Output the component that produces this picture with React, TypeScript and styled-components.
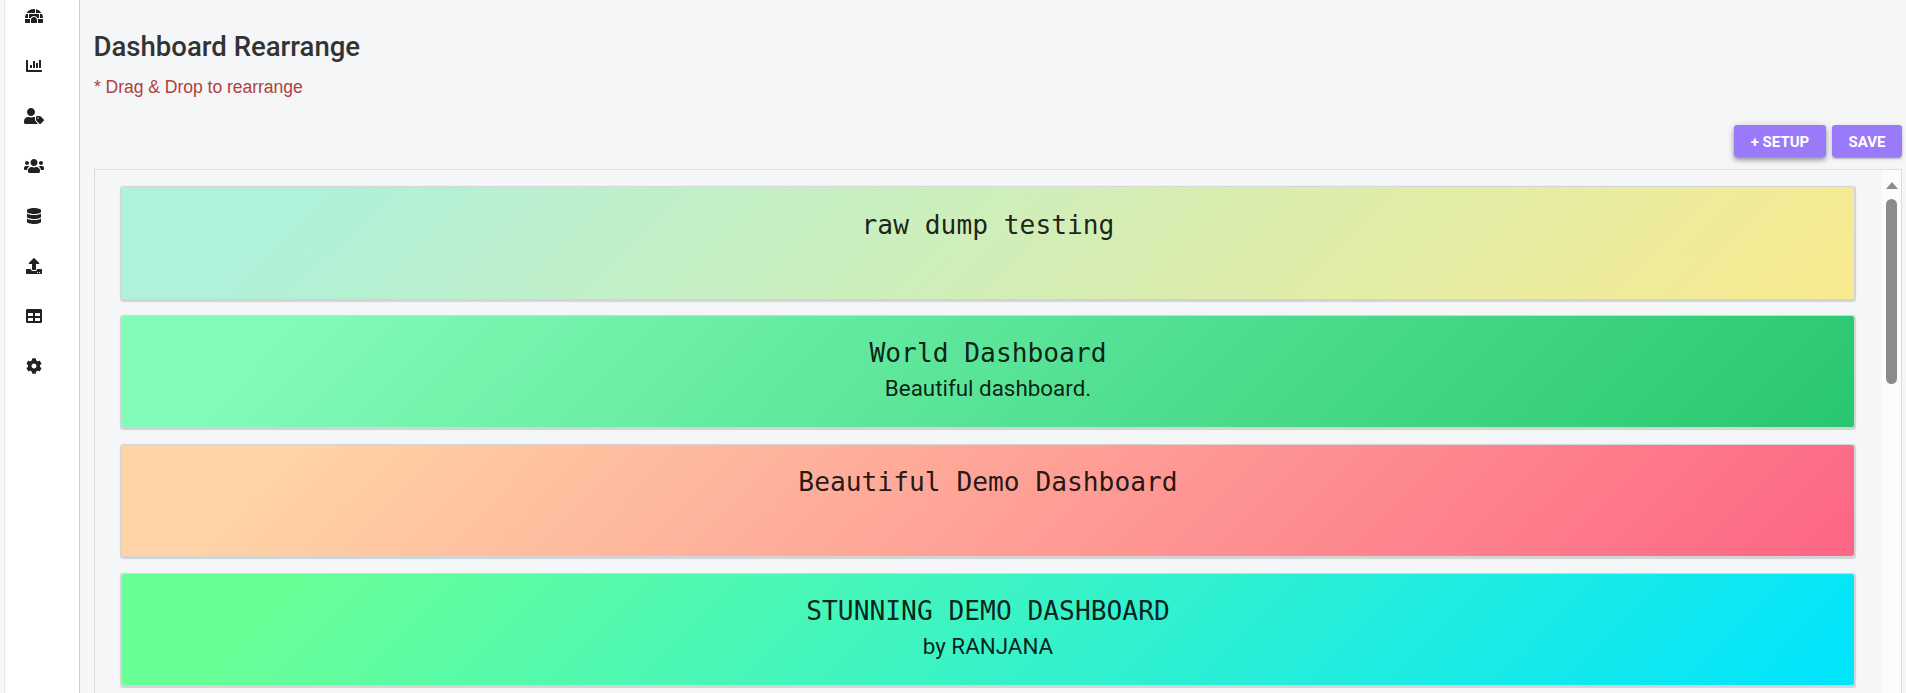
import React from "react";
import styled, { createGlobalStyle, css } from "styled-components";
import {
  FaChartBar,
  FaCog,
  FaDatabase,
  FaIgloo,
  FaTable,
  FaUpload,
  FaUserTag,
  FaUsers,
} from "react-icons/fa";

const GlobalStyle = createGlobalStyle`
  *, *::before, *::after { box-sizing: border-box; }
  html, body { margin: 0; height: 100%; overflow: hidden; }
  body { background: #f4f6f8; font-family: Roboto, "Liberation Sans", sans-serif; }
  #root { height: 100%; }
`;

const Page = styled.div`
  display: flex;
  height: 100vh;
  overflow: hidden;
  padding-left: 4px;
`;

const Sidebar = styled.nav`
  flex: 0 0 76px;
  display: flex;
  flex-direction: column;
  align-items: center;
  padding-right: 16px;
  margin-top: -9px;
  height: calc(100% + 9px);
  background: #fff;
  border-left: 1px solid #e6e6e6;
  border-right: 1px solid #cfcfd1;
`;

const NavItem = styled.a<{ $iconWidth: number }>`
  flex: 0 0 50px;
  display: flex;
  align-items: center;
  justify-content: center;
  color: #212121;

  svg {
    display: block;
    flex: none;
    height: 16px;
    width: ${(p) => p.$iconWidth}px;
  }
`;

const Main = styled.main`
  flex: 1;
  min-width: 0;
  display: flex;
  flex-direction: column;
  padding: 30px 4px 0 14px;
`;

const Title = styled.h1`
  margin: 0 0 0 -0.5px;
  font-size: 27.55px;
  line-height: 34px;
  font-weight: 500;
  color: #333;
`;

const Hint = styled.p`
  margin: 11px 0 0;
  font-family: "Liberation Sans", Arial, sans-serif;
  font-size: 17.6px;
  line-height: 24px;
  letter-spacing: -0.06px;
  color: #b0413e;
`;

const Actions = styled.div`
  display: flex;
  justify-content: flex-end;
  gap: 6px;
  margin: 26px 0 12px;
`;

const ActionButton = styled.button<{ $width: number; $raised?: boolean }>`
  width: ${(p) => p.$width}px;
  height: 32px;
  padding: 2px 0 0;
  border: 0;
  border-radius: 3px;
  background: #9a79fa;
  color: #fff;
  font: 700 15px/30px Roboto, sans-serif;
  ${(p) =>
    p.$raised
      ? css`
          box-shadow: 0 2px 4px -1px rgba(0, 0, 0, 0.3),
            0 4px 5px 0 rgba(0, 0, 0, 0.18), 0 1px 10px 0 rgba(0, 0, 0, 0.14);
        `
      : css`
          box-shadow: 0 3px 1px -2px rgba(0, 0, 0, 0.2),
            0 2px 2px 0 rgba(0, 0, 0, 0.18), 0 1px 5px 0 rgba(0, 0, 0, 0.12);
        `}
`;

const Board = styled.section`
  flex: 1;
  min-height: 0;
  display: flex;
  border: 1px solid #dcdee0;
  border-bottom: 0;
  overflow: hidden;
`;

const CardList = styled.div`
  flex: 1;
  display: flex;
  flex-direction: column;
  gap: 18px;
  padding: 17px 28px 0 27px;
`;

const Card = styled.article<{ $from: string; $to: string; $first?: boolean }>`
  flex: 0 0 111px;
  padding-top: 20px;
  border-radius: 2px;
  background: linear-gradient(135deg, ${(p) => p.$from} 10%, ${(p) => p.$to} 100%);
  box-shadow: 0 1px 1px 1.5px #d2d3d4;
  text-align: center;
  color: rgba(0, 0, 0, 0.87);
  ${(p) =>
    p.$first &&
    css`
      flex-basis: 112px;
      padding-top: 21px;
      margin-bottom: -1px;
    `}
`;

const CardTitle = styled.h2`
  margin: 0;
  font: 400 26.25px/34px Consolas, "DejaVu Sans Mono", monospace;
`;

const CardNote = styled.p`
  margin: 0;
  font-size: 22.4px;
  line-height: 36px;
`;

const Scrollbar = styled.div`
  flex: 0 0 19px;
  display: flex;
  flex-direction: column;
  align-items: center;
  padding-top: 12px;
  background: #fcfcfc;
`;

const ScrollArrow = styled.div`
  border: 6.5px solid transparent;
  border-top: 0;
  border-bottom: 7px solid #8b8b8b;
  margin-bottom: 10px;
`;

const ScrollThumb = styled.div`
  width: 11px;
  height: 185px;
  border-radius: 6px;
  background: #8b8b8b;
`;

const navItems = [
  { name: "home", Icon: FaIgloo, width: 18 },
  { name: "charts", Icon: FaChartBar, width: 16 },
  { name: "roles", Icon: FaUserTag, width: 20 },
  { name: "users", Icon: FaUsers, width: 20 },
  { name: "data", Icon: FaDatabase, width: 14 },
  { name: "upload", Icon: FaUpload, width: 16 },
  { name: "tables", Icon: FaTable, width: 16 },
  { name: "settings", Icon: FaCog, width: 16 },
];

const dashboards = [
  { title: "raw dump testing", note: "", from: "#aff1da", to: "#f9ea8f" },
  { title: "World Dashboard", note: "Beautiful dashboard.", from: "#81fbb8", to: "#28c76f" },
  { title: "Beautiful Demo Dashboard", note: "", from: "#ffd3a5", to: "#fd6585" },
  { title: "STUNNING DEMO DASHBOARD", note: "by RANJANA", from: "#69ff97", to: "#00e4ff" },
];

export default function App() {
  return (
    <Page>
      <GlobalStyle />
      <Sidebar>
        {navItems.map(({ name, Icon, width }) => (
          <NavItem key={name} $iconWidth={width}>
            <Icon preserveAspectRatio="xMidYMid meet" />
          </NavItem>
        ))}
      </Sidebar>
      <Main>
        <Title>Dashboard Rearrange</Title>
        <Hint>* Drag &amp; Drop to rearrange</Hint>
        <Actions>
          <ActionButton $width={92} $raised>+ SETUP</ActionButton>
          <ActionButton $width={70}>SAVE</ActionButton>
        </Actions>
        <Board>
          <CardList>
            {dashboards.map((d, i) => (
              <Card key={d.title} $from={d.from} $to={d.to} $first={i === 0}>
                <CardTitle>{d.title}</CardTitle>
                {d.note && <CardNote>{d.note}</CardNote>}
              </Card>
            ))}
          </CardList>
          <Scrollbar>
            <ScrollArrow />
            <ScrollThumb />
          </Scrollbar>
        </Board>
      </Main>
    </Page>
  );
}
